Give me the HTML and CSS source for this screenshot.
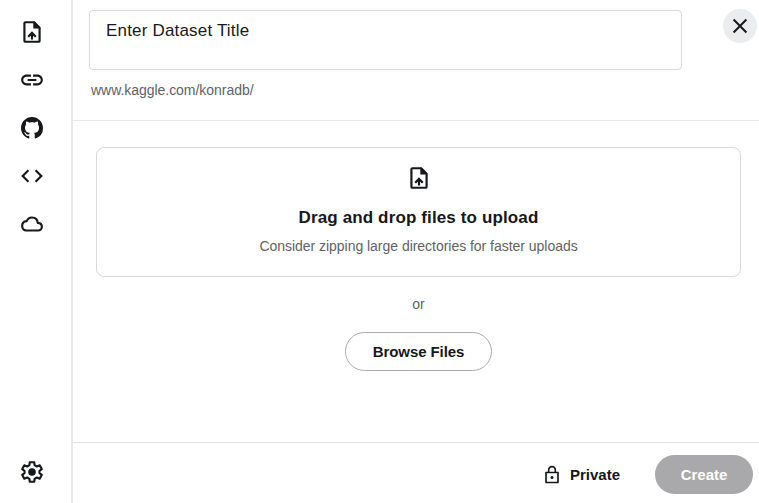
FILE: index.html
```html
<!DOCTYPE html>
<html lang="en">
<head>
<meta charset="utf-8">
<title>Upload dataset</title>
<link rel="stylesheet" href="styles.css">
</head>
<body>
<svg class="defs" width="0" height="0" aria-hidden="true">
  <symbol id="upload-file" viewBox="0 0 24 24">
    <path fill="none" stroke="currentColor" stroke-width="2" stroke-linejoin="round" d="M14 3H6a1 1 0 0 0-1 1v16a1 1 0 0 0 1 1h12a1 1 0 0 0 1-1V8z"/>
    <path d="M13.200 2.500v6.300H19.500V8L14.500 2.500zM7.800 15.600l1.400 1.400 1.800-1.600V19h2v-3.600l1.800 1.600 1.400-1.400-4.200-4.200z"/>
  </symbol>
</svg>
<div class="app">
  <nav class="rail">
    <svg class="icon"><use href="#upload-file"/></svg>
    <svg class="icon" viewBox="0 0 24 24"><path d="M3.900 12c0-1.710 1.390-3.100 3.100-3.100h4V7H7c-2.760 0-5 2.240-5 5s2.240 5 5 5h4v-1.900H7c-1.710 0-3.100-1.390-3.100-3.100zM8 13h8v-2H8v2zm9-6h-4v1.900h4c1.710 0 3.100 1.390 3.100 3.100s-1.390 3.100-3.100 3.100h-4V17h4c2.760 0 5-2.240 5-5s-2.240-5-5-5z"/></svg>
    <svg class="icon github" viewBox="0 0 16 16"><path d="M8 0C3.58 0 0 3.58 0 8c0 3.54 2.29 6.53 5.47 7.59.4.07.55-.17.55-.38 0-.19-.01-.82-.01-1.49-2.01.37-2.53-.49-2.69-.94-.09-.23-.48-.94-.82-1.13-.28-.15-.68-.52-.01-.53.63-.01 1.08.58 1.23.82.72 1.21 1.87.87 2.33.66.07-.52.28-.87.51-1.07-1.78-.2-3.64-.89-3.64-3.95 0-.87.31-1.59.82-2.15-.08-.2-.36-1.02.08-2.12 0 0 .67-.21 2.2.82.64-.18 1.32-.27 2-.27s1.36.09 2 .27c1.53-1.04 2.2-.82 2.2-.82.44 1.1.16 1.92.08 2.12.51.56.82 1.27.82 2.15 0 3.07-1.87 3.75-3.65 3.95.29.25.54.73.54 1.48 0 1.07-.01 1.93-.01 2.2 0 .21.15.46.55.38A8.01 8.01 0 0 0 16 8c0-4.42-3.58-8-8-8z"/></svg>
    <svg class="icon" viewBox="0 0 24 24"><path d="M9.400 16.600 4.800 12l4.600-4.600L8 6l-6 6 6 6 1.400-1.400zm5.200 0 4.600-4.600-4.600-4.600L16 6l6 6-6 6-1.400-1.400z"/></svg>
    <svg class="icon" viewBox="0 0 24 24"><path fill="none" stroke="currentColor" stroke-width="2" stroke-linejoin="round" d="M6.800 18h10.800c2 0 3.500-1.500 3.500-3.400 0-2.100-1.600-3.500-3.800-3.600C17 8 14.900 6 12 6c-2.300 0-4 1.200-4.900 3.300C4.600 9.500 2.900 11.400 2.900 13.700 2.900 16.200 4.600 18 6.800 18z"/></svg>
    <svg class="icon settings" viewBox="0 0 24 24"><path fill="none" stroke="currentColor" stroke-width="2" stroke-linejoin="round" d="M9.900 3h4.200l.3 2.700 2.100 1.200 2.600-1.100 2 3.600-2.200 1.600v2l2.200 1.600-2 3.600-2.600-1.100-2.100 1.200-.3 2.700H9.900l-.3-2.700-2.100-1.200-2.600 1.100-2-3.600 2.200-1.600v-2L2.900 9.400l2-3.600 2.600 1.100 2.100-1.200z"/><circle cx="12" cy="12" r="3.500"/></svg>
  </nav>
  <main class="panel">
    <header class="header">
      <div class="title-group">
        <div class="title-field"><span class="title-text">Enter Dataset Title</span></div>
        <div class="slug">www.kaggle.com/konradb/</div>
      </div>
      <button class="close" aria-label="Close"><svg viewBox="0 0 24 24"><path d="M5 5l14 14M19 5L5 19" fill="none" stroke="currentColor" stroke-width="2.200"/></svg></button>
    </header>
    <section class="content">
      <div class="dropzone">
        <svg class="icon"><use href="#upload-file"/></svg>
        <h2>Drag and drop files to upload</h2>
        <p>Consider zipping large directories for faster uploads</p>
      </div>
      <div class="or">or</div>
      <button class="browse">Browse Files</button>
    </section>
    <footer class="footer">
      <svg class="lock" viewBox="0 0 24 24"><path fill="none" stroke="currentColor" stroke-width="2" stroke-linejoin="round" d="M4.800 9h14.400v12H4.800zM8 9V6a4 4 0 0 1 8 0v3"/><circle cx="12" cy="15" r="1.800"/></svg>
      <span class="private">Private</span>
      <button class="create">Create</button>
    </footer>
  </main>
</div>
</body>
</html>
```
FILE: styles.css
```css
* { box-sizing: border-box; }
body { margin: 0; background: #fff; color: #17181b; font-family: "Liberation Sans", Arial, sans-serif; }
button { font: inherit; color: inherit; padding: 0; }
svg { fill: currentColor; display: block; flex: none; }
.defs { position: absolute; }
.app { display: flex; width: 759px; height: 503px; overflow: hidden; }
.rail { width: 73px; flex: none; border-right: 2px solid #e9e9e9; padding: 19.4px 7px 18px 0; display: flex; flex-direction: column; align-items: center; gap: 22px; }
.icon { width: 26px; height: 26px; }
.github { width: 22px; height: 22px; margin: 2px; }
.settings { margin-top: auto; }
.panel { flex: 1; display: flex; flex-direction: column; }
.header { height: 121px; border-bottom: 1px solid #e9e9e9; padding: 8px 2px 0 16px; display: flex; justify-content: space-between; }
.title-group { padding-top: 2px; }
.title-field { width: 593px; height: 60px; border: 1px solid #d9d9d9; border-radius: 4px; padding: 10px 16px; font-size: 17px; line-height: 20px; }
.title-text { letter-spacing: .18px; }
.slug { margin: 12px 0 0 2px; font-size: 14px; line-height: 17px; letter-spacing: -.04px; color: #616265; }
.close { width: 34px; height: 34px; margin-top: 1px; border: 0; border-radius: 50%; background: #ebecee; display: flex; align-items: center; justify-content: center; }
.close svg { width: 22px; height: 22px; }
.content { flex: 1; padding: 26px 18px 0 23px; display: flex; flex-direction: column; align-items: center; }
.dropzone { width: 645px; height: 130px; border: 1px solid #d9d9d9; border-radius: 8px; padding-top: 17px; display: flex; flex-direction: column; align-items: center; }
.dropzone h2 { margin: 17px 0 0; font-size: 17px; line-height: 20px; letter-spacing: .13px; }
.dropzone p { margin: 10px 0 0; font-size: 14px; line-height: 16px; letter-spacing: -.03px; color: #616265; }
.or { margin-top: 19px; font-size: 14px; line-height: 17px; color: #616265; }
.browse { width: 147px; height: 39px; margin-top: 19px; border: 1px solid #adadad; border-radius: 20px; background: #fff; font-size: 15px; font-weight: 700; letter-spacing: -.08px; }
.footer { height: 61px; border-top: 1px solid #e3e3e3; padding: 3px 6px 0 0; display: flex; align-items: center; justify-content: flex-end; font-size: 15px; font-weight: 700; }
.lock { width: 20px; height: 20px; margin-right: 8px; }
.private { margin-right: 35px; }
.create { width: 98px; height: 39px; border: 0; border-radius: 20px; background: #a9a9ab; color: #fff; }
```
